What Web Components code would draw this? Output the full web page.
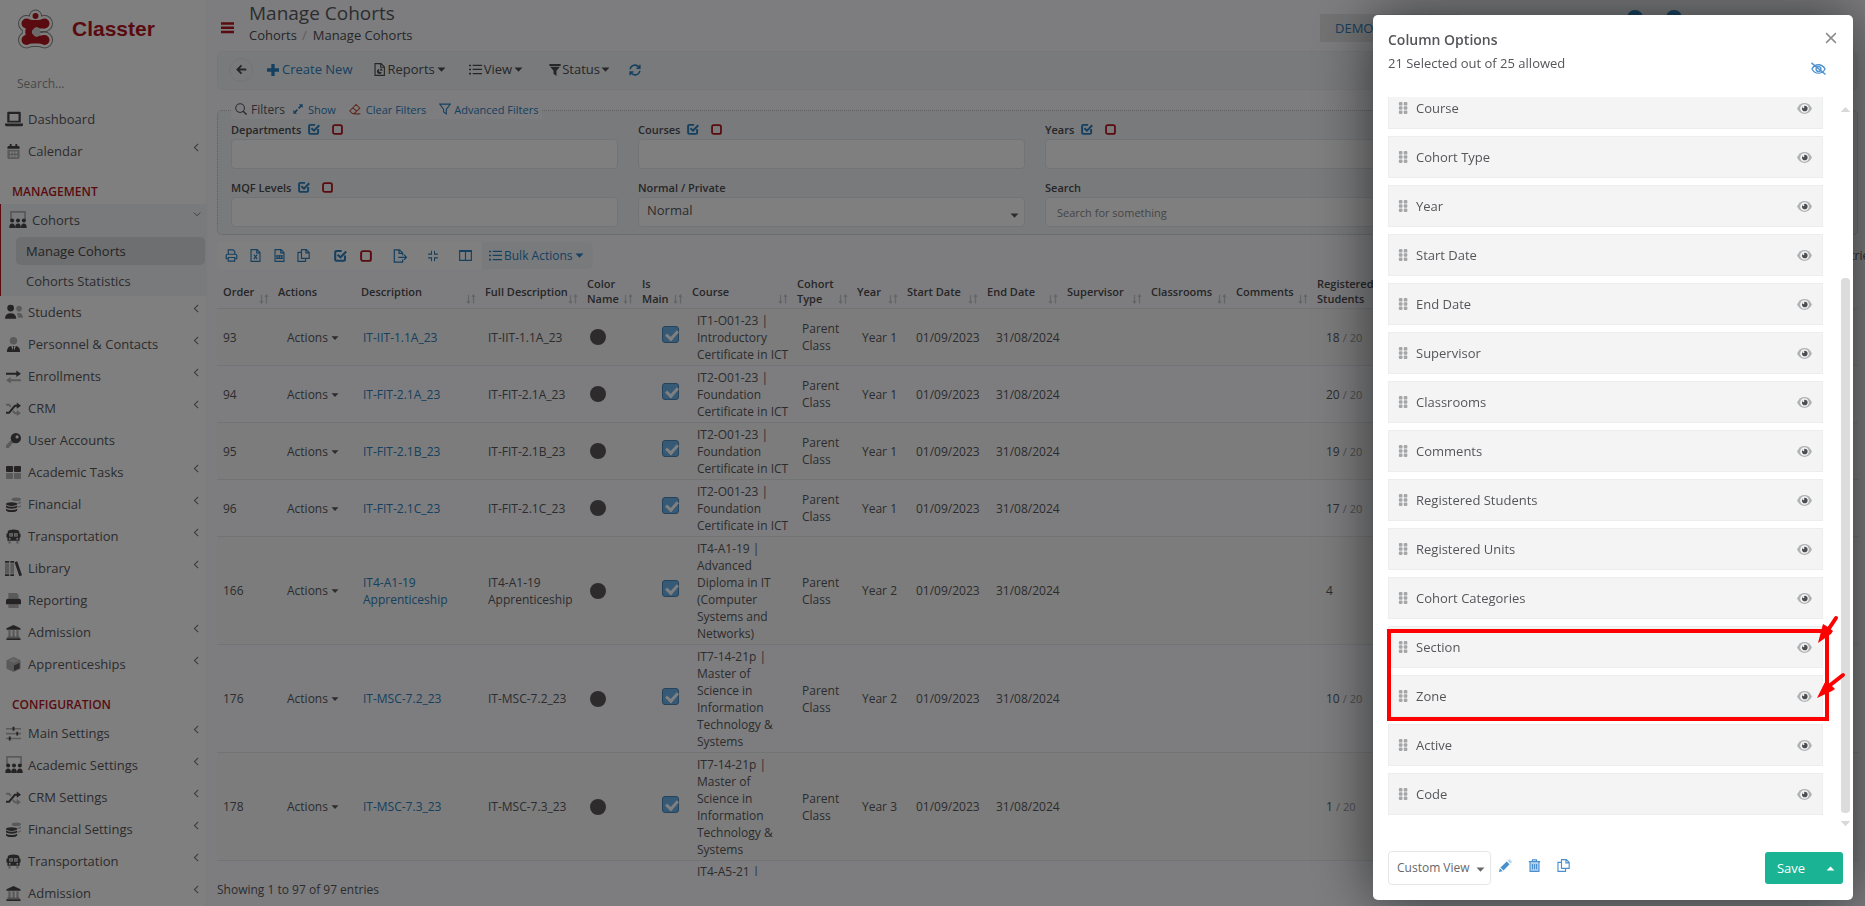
<!DOCTYPE html>
<html lang="en">
<head>
<meta charset="utf-8">
<title>Manage Cohorts</title>
<style>
  body {
    margin: 0;
    font: 13px/17px "Open Sans", "Noto Sans", sans-serif;
    color: #58595c;
    --link: #2b80c0;
    --red: #b4161f;
    --panel: #f3f5f8;
    --page: #fafbfe;
    --line: #e4e7ea;
  }
</style>
</head>
<body>
<cohorts-app></cohorts-app>

<script>
  // Icons are drawn on a 16x16 grid; the faded parts give the two-tone look
  const ICONS = {
    laptop: '<path d="M2 2.500Q2 1.500 3 1.500H13Q14 1.500 14 2.500V11H2ZM4 3.500V9.500H12V3.500Z" fill-rule="evenodd"/><path d="M0 12H16V13Q16 14.500 14.500 14.500H1.500Q0 14.500 0 13Z"/>',
    calendar: '<g class="d"><path d="M1.500 6H14.500V14.500Q14.500 16 13 16H3Q1.500 16 1.500 14.500Z"/></g><path d="M1.500 5V3.500Q1.500 2 3 2H4V0H6V2H10V0H12V2H13Q14.500 2 14.500 3.500V5Z"/><path d="M4 8h2v2H4zM7 8h2v2H7zM10 8h2v2h-2zM4 12h2v2H4zM7 12h2v2H7zM10 12h2v2h-2z" fill="#fff"/>',
    classroom: '<path class="d" d="M1 0H15V8H13.500V1.500H2.500V8H1Z"/><circle cx="2.800" cy="8.500" r="1.800"/><circle cx="8" cy="8.500" r="1.800"/><circle cx="13.200" cy="8.500" r="1.800"/><path d="M.3 15Q0 11 2.800 11T5.300 15ZM5.500 15Q5.200 11 8 11T10.500 15ZM10.700 15Q10.400 11 13.200 11T15.700 15Z"/>',
    users: '<circle cx="5" cy="4.500" r="3"/><path d="M0 14Q0 9 5 9T10 14Z"/><g class="d"><circle cx="12.500" cy="5" r="2.500"/><path d="M10.500 9Q16 8 16 13H11.500Q11.500 10.500 10.500 9Z"/></g>',
    tie: '<circle class="d" cx="8" cy="4" r="4"/><path d="M1 16Q1 10 5.500 9.500L7.300 14 7.600 11 7 9.500H9L8.400 11 8.700 14 10.500 9.500Q15 10 15 16Z"/>',
    swap: '<path d="M0 4H11V1.500L16 5 11 8.500V6H0Z"/><path class="d" d="M16 11H5V8.500L0 12 5 15.500V13H16Z"/>',
    shuffle: '<path d="M0 11.500H2.800L9 4H11.500V1.500L16 5 11.500 8.300V6H10L3.800 13.500H0Z"/><path class="d" d="M0 3H3.800L6 5.500 4.600 7 2.800 5H0ZM8 9.800 10 12H11.500V9.500L16 13 11.500 16V14H9L6.500 11.300Z"/>',
    key: '<path d="M10.500 0A5.500 5.500 0 1 0 10.500 11 5.500 5.500 0 0 0 10.500 0M11.800 2.500A1.700 1.700 0 1 1 11.800 5.900 1.700 1.700 0 0 1 11.800 2.500" fill-rule="evenodd"/><path class="d" d="M5.500 7.500 0 13V16H3.500V14H5.500V12L8.500 10.600Z"/>',
    tasks: '<rect x="0" y="1" width="7.500" height="6.500" rx="1"/><rect x="8.500" y="1" width="7.500" height="6.500" rx="1"/><g class="d"><rect x="0" y="8.500" width="7.500" height="6.500" rx="1"/><rect x="8.500" y="8.500" width="7.500" height="6.500" rx="1"/></g>',
    coins: '<g class="d"><ellipse cx="11" cy="2.500" rx="5" ry="2"/><path d="M12 6Q15 6 16 4.500V6Q15 7.500 12.500 7.500ZM12.800 10Q15 9.800 16 8.500V10Q15 11 12.800 11.500Z"/></g><ellipse cx="6" cy="7.500" rx="6" ry="2"/><path d="M0 9Q2 10.500 6 10.500T12 9V11Q11 12.500 6 12.500T0 11ZM0 12.500Q2 13.800 6 13.800T12 12.500V14Q11 16 6 16T0 14Z"/>',
    bus: '<path d="M2 2.500Q3 .5 8 .5T14 2.500L14.500 5H15.500V9H14.500V12.500H1.500V9H.5V5H1.500ZM3.500 4.500V8H7.400V4.500ZM8.600 4.500V8H12.500V4.500ZM4 9.500A1 1 0 1 0 4 11.500 1 1 0 0 0 4 9.500M12 9.500A1 1 0 1 0 12 11.500 1 1 0 0 0 12 9.500" fill-rule="evenodd"/><path class="d" d="M2.500 13H5V15.500H2.500ZM11 13H13.500V15.500H11ZM4 5H7V7.500H4ZM9 5H12V7.500H9Z"/>',
    books: '<g class="d"><path d="M0 3H4V13H0ZM5 3H8.500V13H5Z"/></g><path d="M0 1H4V2.500H0ZM5 1H8.500V2.500H5ZM0 13.500H4V15H0ZM5 13.500H8.500V15H5ZM9 2 11.500 1.200 16 14.300 13.500 15.200Z"/>',
    printer: '<g class="d"><path d="M2.500 0H11.500L13.500 2V6H2.500ZM2.500 12H13.500V16H2.500Z"/></g><path d="M2 6H14Q16 6 16 8V12H0V8Q0 6 2 6Z"/>',
    bank: '<path d="M8 0 15.500 3.500V5H.5V3.500ZM.5 14H15.500V16H.5ZM1.500 12.500H14.500V13.300H1.500Z"/><path class="d" d="M2.500 5.500H5V12.500H2.500ZM6.800 5.500H9.300V12.500H6.800ZM11 5.500H13.500V12.500H11Z"/>',
    cube: '<path class="d" d="M8 0 15.500 3.500V12.500L8 16 .5 12.500V3.500Z"/><path d="M8 1.300 13.500 3.800 8 6.300 2.500 3.800Z" fill="#fff" opacity=".35"/><path d="M14.500 6V12L8.500 15V9Z" opacity=".8"/>',
    sliders: '<g class="d"><path d="M0 2H16V3.800H0ZM0 7.200H16V9H0ZM0 12.400H16V14.200H0Z"/></g><path d="M7 .8H9V5H7ZM11 6H13V10.200H11ZM3 11.200H5V15.400H3Z"/>',
    left: '<path d="M10 3.500 5.500 8 10 12.500" class="s"/>',
    down: '<path d="M1.500 5 8 11.500 14.500 5" class="s m"/>',
    caret: '<path d="M1 4.500H15L8 12Z"/>',
    caretUp: '<path d="M1 11.500H15L8 4.500Z"/>',
    menu: '<path d="M0 1.500H16V4.500H0ZM0 6.700H16V9.700H0ZM0 12H16V15H0Z"/>',
    back: '<path d="M15 8H2.500M8 2 2 8 8 14" class="s b"/>',
    plus: '<path d="M5.800 0H10.200V5.800H16V10.200H10.200V16H5.800V10.200H0V5.800H5.800Z"/>',
    report: '<path d="M2.500 .8H10L14 4.800V15.200H2.500ZM9.500 1V5.200H14" class="s"/><path d="M7.500 7.500A3 3 0 1 0 10.800 11H7.700Z"/><path d="M9 6.500A3 3 0 0 1 11.800 9.500H9Z"/>',
    list: '<path d="M0 2H2.500V4H0ZM0 7H2.500V9H0ZM0 12H2.500V14H0ZM4.500 2.200H16V3.700H4.500ZM4.500 7.200H16V8.700H4.500ZM4.500 12.200H16V13.700H4.500Z"/>',
    filter: '<path d="M.5 0H15.500V2.500H.5ZM1.500 3.500H14.500L10 9V16L6 13V9Z"/>',
    funnel: '<path d="M1 1.500H15L9.800 8.500V14.500L6.200 12V8.500Z" class="s"/>',
    refresh: '<path d="M1.500 7A6.500 6.500 0 0 1 13 4L14.500 5.500M14.500 1V5.500H10M14.500 9A6.500 6.500 0 0 1 3 12L1.500 10.500M1.500 15V10.500H6" class="s m"/>',
    search: '<circle cx="6.800" cy="6.800" r="5.800" class="s"/><path d="M11 11 15.500 15.500" class="s m"/>',
    expand: '<path d="M9.500 .5H15.500V6.500L13.500 4.500 10 8 8 6 11.500 2.500ZM6.500 15.500H.5V9.500L2.500 11.500 6 8 8 10 4.500 13.500Z"/>',
    eraser: '<path d="M9.500 2 14.500 7 7 14H4.500L1 10.500ZM5 6.500 10.500 11M6 14.500H15" class="s"/>',
    print: '<path d="M4 6V1H10L12 3V6M4 12H1.500V8Q1.500 6.500 3 6.500H13Q14.500 6.500 14.500 8V12H12M4 10.500H12V15H4Z" class="s"/>',
    xls: '<path d="M2.500 .7H10L13.500 4.200V15.300H2.500ZM9.500 1V4.700H13.300M6 7 10 12.500M10 7 6 12.500" class="s"/>',
    csv: '<path d="M2.500 .7H10L13.500 4.200V15.300H2.500ZM9.500 1V4.700H13.300" class="s"/><path d="M4 8.500H12M4 11.500H12" class="s"/><path d="M5 8V12M8 8V12M11 8V12" class="s"/>',
    copy: '<path d="M5.500 .8H11.500L15 4.300V11.500H5.500ZM11 1V4.800H14.800M5 4.200H1.200V15.200H10.500V12" class="s"/>',
    checked: '<path d="M13.500 8V13Q13.500 14.500 12 14.500H3Q1.500 14.500 1.500 13V4Q1.500 2.500 3 2.500H9.500M4.500 7 8 10.300 15 3" class="s b"/>',
    square: '<rect x="1.500" y="1.500" width="13" height="13" rx="2.500" class="s b"/>',
    exported: '<path d="M11 7V4.500L7.500 1H1.500V15H11V12M7 1V5H11M6 9.500H15.500M12.500 6.500 15.500 9.500 12.500 12.500" class="s"/>',
    compress: '<path d="M6 1V5.500H1.500M10 1V5.500H14.500M6 15V10.500H1.500M10 15V10.500H14.500" class="s"/>',
    columns: '<path d="M.8 2H15.200V14H.8ZM8 2V14" class="s"/><path d="M.8 1.500H15.200V3.800H.8Z"/>',
    sort: '<path d="M4 1V14M1.500 11.500 4 14.500 6.500 11.500M12 15V2M9.500 4.500 12 1.500 14.500 4.500" class="s m"/>',
    close: '<path d="M1.500 1.500 14.500 14.500M14.500 1.500 1.500 14.500" class="s m"/>',
    grip: '<g><rect x="2.500" y="0" width="4.800" height="4.800" rx="1.300"/><rect x="9" y="0" width="4.800" height="4.800" rx="1.300"/><rect x="2.500" y="5.600" width="4.800" height="4.800" rx="1.300"/><rect x="9" y="5.600" width="4.800" height="4.800" rx="1.300"/><rect x="2.500" y="11.200" width="4.800" height="4.800" rx="1.300"/><rect x="9" y="11.200" width="4.800" height="4.800" rx="1.300"/></g>',
    eye: '<path d="M0 8Q3 2.200 8 2.200T16 8Q13 13.800 8 13.800T0 8Z" fill="#b0b2b4"/><circle cx="8" cy="8" r="4.600" fill="#f6f6f6"/><circle cx="8.300" cy="8" r="3" fill="#4c4e51"/><circle cx="6.800" cy="6.500" r="1.100" fill="#f6f6f6"/>',
    eyeSlash: '<path d="M1 8.500Q3.500 4 8 4T15 8.500Q12.500 13 8 13T1 8.500ZM.5 2 15.500 14.500" class="s"/><circle cx="8" cy="8.500" r="2.600" class="s"/>',
    pencil: '<path d="M0 16 1 11.500 4.500 15Z"/><path d="M1.800 10.500 9.500 3 13 6.500 5.500 14.200Z"/><path class="d" d="M10.500 2 12 .5Q13 0 14 1L15 2Q16 3 15.500 4L14 5.500Z"/>',
    trash: '<path class="d" d="M2.500 4H13.500V15H2.500Z"/><path d="M1 3.300H15M5.500 3V1H10.500V3M2.500 3.500V15.200H13.500V3.500M5.500 6V12.500M8 6V12.500M10.500 6V12.500" class="s"/>'
  };

  // Small helper so that every element sets up its shadow root the same way
  class BaseElement extends HTMLElement {
    constructor() {
      super();
      this.attachShadow({ mode: 'open' });
    }

    connectedCallback() {
      this.render();
    }

    paint(css, html) {
      this.shadowRoot.innerHTML = `
        <style>
          * { box-sizing: border-box; }
          a { color: inherit; text-decoration: none; }
          button, input, select { font: inherit; color: inherit; }
          button { padding: 0; border: 0; background: none; cursor: pointer; }
          ${css}
        </style>
        ${html}`;
    }
  }

  class AppIcon extends BaseElement {
    render() {
      const size = this.getAttribute('size') || 12;
      this.paint(`
        :host { display: inline-flex; flex: none; }
        svg { display: block; fill: currentColor; }
        .d { opacity: .4; }
        .s { fill: none; stroke: currentColor; stroke-width: 1.4; }
        .m { stroke-width: 2; }
        .b { stroke-width: 2.6; }
      `, `<svg width="${size}" height="${size}" viewBox="0 0 16 16" aria-hidden="true">${ICONS[this.getAttribute('name')]}</svg>`);
    }
  }

  class BrandLogo extends BaseElement {
    render() {
      this.paint(`
        :host { display: flex; align-items: center; gap: 18px; padding: 8px 17px 0; }
        strong { font: bold 21px/24px "Liberation Sans", Arial, sans-serif; color: var(--red); }
      `, `
        <svg width="37" height="42" viewBox="0 0 37 42" aria-hidden="true">
          <defs>
            <g id="mark" stroke-linejoin="round" stroke-linecap="round">
              <circle cx="18.500" cy="8" r="3"/>
              <circle cx="9.500" cy="15.500" r="5"/><circle cx="27.500" cy="15.500" r="5"/>
              <circle cx="9.500" cy="32" r="5"/><circle cx="27.500" cy="32" r="5"/>
              <path d="M9 11 16 12H21L28 11V20.500L22.500 20.500A4.500 4.500 0 1 0 22.500 27.500L28 27.500V36L21 35.500H16L9 36V30Q7.500 23.500 9 18Z"/>
            </g>
          </defs>
          <use href="#mark" fill="#888" stroke="#888" stroke-width="7"/>
          <use href="#mark" fill="#fff" stroke="#fff" stroke-width="5"/>
          <circle cx="19.500" cy="24" r="4" fill="#d4d4d6"/>
          <use href="#mark" fill="#b4161f"/>
        </svg>
        <strong>Classter</strong>`);
    }
  }

  class NavItem extends BaseElement {
    render() {
      const arrow = this.getAttribute('arrow');
      this.paint(`
        :host { display: block; }
        a { display: flex; align-items: center; gap: 5px; height: 32px; padding: 0 3px 0 4px; color: #58585d; }
        .icon { display: flex; justify-content: center; width: 19px; color: #4c4649; }
        .text { flex: 1; white-space: nowrap; }
        .arrow { height: 20px; color: #7d7d80; }
        .arrow.down { margin-right: 2px; }
      `, `
        <a href="#">
          <span class="icon"><app-icon name="${this.getAttribute('icon')}" size="${this.getAttribute('size') || 15}"></app-icon></span>
          <span class="text"><slot></slot></span>
          ${arrow ? `<app-icon class="arrow ${arrow}" name="${arrow}" size="${arrow === 'down' ? 8 : 13}"></app-icon>` : ''}
        </a>`);
    }
  }

  class AppSidebar extends BaseElement {
    render() {
      const item = ([icon, text, arrow = 'left', size = 15]) =>
        `<nav-item icon="${icon}" arrow="${arrow}" size="${size}">${text}</nav-item>`;
      const management = [
        ['users', 'Students', 'left', 18], ['tie', 'Personnel &amp; Contacts'], ['swap', 'Enrollments'],
        ['shuffle', 'CRM'], ['key', 'User Accounts', ''], ['tasks', 'Academic Tasks'], ['coins', 'Financial'],
        ['bus', 'Transportation'], ['books', 'Library', 'left', 17], ['printer', 'Reporting', ''],
        ['bank', 'Admission'], ['cube', 'Apprenticeships']
      ];
      const configuration = [
        ['sliders', 'Main Settings'], ['classroom', 'Academic Settings', 'left', 18], ['shuffle', 'CRM Settings'],
        ['coins', 'Financial Settings'], ['bus', 'Transportation'], ['bank', 'Admission']
      ];
      this.paint(`
        :host { display: block; width: 207px; height: 100vh; overflow: hidden; background: #fff; border-right: 1px solid #f4f5f8; }
        input { display: block; width: 100%; height: 28px; margin: 19px 0 6px; padding: 0 17px; border: 0; background: none; font-size: 12px; outline: 0; }
        input::placeholder { color: #8f9092; opacity: 1; }
        h2 { margin: 0; padding: 16px 12px 4px; font-size: 12px; line-height: 17px; font-weight: 600; color: var(--red); }
        .open { height: 92px; padding-left: 3px; border-left: 1px solid var(--red); background: var(--panel); }
        .open a { display: block; height: 28px; margin: 1px 1px 2px 12px; padding: 0 10px; border-radius: 5px; line-height: 28px; color: #58585d; }
        .open a.current { background: #dcdee1; color: #48484b; }
      `, `
        <brand-logo></brand-logo>
        <input type="text" placeholder="Search..." aria-label="Search">
        ${item(['laptop', 'Dashboard', '', 18])}
        ${item(['calendar', 'Calendar'])}
        <h2>MANAGEMENT</h2>
        <div class="open">
          ${item(['classroom', 'Cohorts', 'down', 18])}
          <a class="current" href="#">Manage Cohorts</a>
          <a href="#">Cohorts Statistics</a>
        </div>
        ${management.map(item).join('')}
        <h2>CONFIGURATION</h2>
        ${configuration.map(item).join('')}`);
    }
  }

  class PageHeader extends BaseElement {
    render() {
      this.paint(`
        :host { display: flex; align-items: flex-start; height: 51px; padding-left: 4px; }
        .menu { display: flex; margin-top: 21px; color: var(--red); }
        .titles { flex: 1; padding-left: 15px; }
        h1 { margin: 0; font-size: 19px; line-height: 26px; font-weight: 400; }
        ol { display: flex; margin: 1px 0 0; padding: 0; list-style: none; color: #4c4d50; }
        li + li::before { content: "/"; padding: 0 6px 0 5px; color: #bbb; }
        .demo { width: 140px; height: 28px; margin-top: 14px; padding-left: 15px; background: #e6e7e9; text-align: left; color: var(--link); }
        .badges { display: flex; gap: 23px; width: 398px; padding: 10px 0 0 167px; }
        .badges i { width: 16px; height: 16px; border-radius: 50%; background: #348bcb; }
      `, `
        <button class="menu" aria-label="Toggle menu"><app-icon name="menu" size="13"></app-icon></button>
        <div class="titles">
          <h1>Manage Cohorts</h1>
          <ol><li><a href="#">Cohorts</a></li><li>Manage Cohorts</li></ol>
        </div>
        <button class="demo">DEMO</button>
        <div class="badges"><i></i><i></i></div>`);
    }
  }

  class PageToolbar extends BaseElement {
    render() {
      this.paint(`
        :host { display: flex; align-items: center; height: 39px; padding: 0 0 2px 11px; border: 1px solid #edeff2; border-radius: 6px; background: var(--panel); }
        button { display: flex; align-items: center; gap: 2px; height: 24px; color: #4d4d50; }
        .back { justify-content: center; width: 24px; margin-right: 14px; border: 1px solid var(--line); border-radius: 50%; }
        .new, .refresh { color: var(--link); }
        .new { margin-right: 20px; gap: 3px; }
        .report { margin-right: 23px; }
        .view { margin-right: 26px; }
        .status { margin-right: 19px; gap: 1px; }
      `, `
        <button class="back" aria-label="Back"><app-icon name="back" size="11"></app-icon></button>
        <button class="new"><app-icon name="plus" size="12"></app-icon>Create New</button>
        <button class="report"><app-icon name="report" size="13"></app-icon>Reports<app-icon name="caret" size="9"></app-icon></button>
        <button class="view"><app-icon name="list" size="13"></app-icon>View<app-icon name="caret" size="9"></app-icon></button>
        <button class="status"><app-icon name="filter" size="12"></app-icon>Status<app-icon name="caret" size="9"></app-icon></button>
        <button class="refresh" aria-label="Refresh"><app-icon name="refresh" size="12"></app-icon></button>`);
    }
  }

  class FilterField extends BaseElement {
    render() {
      const label = this.getAttribute('label');
      const type = this.getAttribute('type');
      const control = type === 'select'
        ? '<select id="field"><option>Normal</option><option>Private</option></select><app-icon name="caret" size="9"></app-icon>'
        : `<input id="field" type="text" placeholder="${this.getAttribute('placeholder') || ''}">`;
      this.paint(`
        :host { display: block; }
        .top { display: flex; align-items: center; height: 20px; }
        label { margin-right: 7px; font-size: 11px; font-weight: 600; color: #4c4c50; }
        button { display: flex; margin-right: 12px; color: var(--link); }
        button + button { color: var(--red); }
        .box { position: relative; }
        input, select { display: block; width: 100%; height: 30px; border: 1px solid var(--line); border-radius: 4px; background: #fff; outline: 0; }
        input { padding: 0 11px; font-size: 11px; }
        input::placeholder { color: #8b8c8e; opacity: 1; }
        select { appearance: none; padding: 0 8px 3px; color: #58595c; }
        .box app-icon { position: absolute; right: 6px; top: 14px; pointer-events: none; }
      `, `
        <div class="top">
          <label for="field">${label}</label>
          ${type === 'multi' ? `<button aria-label="Select all"><app-icon name="checked"></app-icon></button>
          <button aria-label="Clear"><app-icon name="square" size="11"></app-icon></button>` : ''}
        </div>
        <div class="box">${control}</div>`);
    }
  }

  class FilterPanel extends BaseElement {
    render() {
      this.paint(`
        :host { display: block; margin-top: 11px; }
        fieldset { min-width: 0; margin: 0; padding: 0 18px 7px 13px; border: 1px dotted #bfc2c6; border-radius: 5px; background: var(--panel); }
        legend { display: flex; align-items: center; height: 18px; padding: 0 4px 2px; background: var(--page); font-size: 11px; }
        legend span { margin: 0 8px 0 4px; font-size: 12px; }
        a { display: flex; align-items: center; gap: 5px; margin-right: 13px; color: var(--link); }
        a:last-child { gap: 3px; margin: 0; }
        .eraser { color: #c0563f; }
        .grid { display: grid; grid-template-columns: repeat(4, 1fr); gap: 8px 20px; }
      `, `
        <fieldset>
          <legend>
            <app-icon name="search"></app-icon><span>Filters</span>
            <a href="#"><app-icon name="expand" size="10"></app-icon>Show</a>
            <a href="#"><app-icon class="eraser" name="eraser" size="12"></app-icon>Clear Filters</a>
            <a href="#"><app-icon name="funnel" size="12"></app-icon>Advanced Filters</a>
          </legend>
          <div class="grid">
            <filter-field label="Departments" type="multi"></filter-field>
            <filter-field label="Courses" type="multi"></filter-field>
            <filter-field label="Years" type="multi"></filter-field>
            <span></span>
            <filter-field label="MQF Levels" type="multi"></filter-field>
            <filter-field label="Normal / Private" type="select"></filter-field>
            <filter-field label="Search" placeholder="Search for something"></filter-field>
          </div>
        </fieldset>`);
    }
  }

  class TableActions extends BaseElement {
    render() {
      this.paint(`
        :host { display: flex; align-items: center; justify-content: space-between; margin-top: 7px; height: 27px; }
        .group { display: flex; height: 27px; border-radius: 5px; background: #fff; overflow: hidden; }
        .group div { display: flex; align-items: center; gap: 11px; padding: 0 10px 0 8px; color: var(--link); }
        .group button { display: flex; align-items: center; }
        .check { margin-left: 13px; }
        .red { color: var(--red); margin: 0 10px 0 2px; }
        .wide { margin-right: 9px; }
        .group .bulk { gap: 2px; padding: 0 9px 0 7px; background: var(--panel); color: var(--link); font-size: 12px; }
        .entries { margin-right: -17px; font-size: 12px; white-space: nowrap; }
      `, `
        <div class="group">
          <div>
            <button aria-label="Print"><app-icon name="print" size="13"></app-icon></button>
            <button aria-label="Excel"><app-icon name="xls" size="13"></app-icon></button>
            <button aria-label="CSV"><app-icon name="csv" size="13"></app-icon></button>
            <button aria-label="Copy"><app-icon name="copy" size="13"></app-icon></button>
            <button class="check" aria-label="Select all"><app-icon name="checked" size="13"></app-icon></button>
            <button class="red" aria-label="Deselect all"><app-icon name="square" size="12"></app-icon></button>
            <button class="wide" aria-label="Export"><app-icon name="exported" size="14"></app-icon></button>
            <button class="wide" aria-label="Collapse"><app-icon name="compress" size="12"></app-icon></button>
            <button aria-label="Columns"><app-icon name="columns" size="13"></app-icon></button>
          </div>
          <button class="bulk"><app-icon name="list" size="13"></app-icon>Bulk Actions<app-icon name="caret" size="9"></app-icon></button>
        </div>
        <span class="entries">entries</span>`);
    }
  }

  class CohortsTable extends BaseElement {
    render() {
      const columns = [
        ['Order', 55], ['Actions', 83], ['Description', 124], ['Full Description', 102], ['Color Name', 55],
        ['Is<br>Main', 50], ['Course', 105], ['Cohort Type', 60], ['Year', 50], ['Start Date', 80],
        ['End Date', 80], ['Supervisor', 84], ['Classrooms', 85], ['Comments', 81], ['Registered Students', 100]
      ];
      const foundation = 'IT2-O01-23 | Foundation Certificate in ICT';
      const master = 'IT7-14-21p | Master of Science in Information Technology &amp; Systems';
      const rows = [
        [93, 'IT-IIT-1.1A_23', 'IT1-O01-23 | Introductory Certificate in ICT', 1, 18, 20],
        [94, 'IT-FIT-2.1A_23', foundation, 1, 20, 20],
        [95, 'IT-FIT-2.1B_23', foundation, 1, 19, 20],
        [96, 'IT-FIT-2.1C_23', foundation, 1, 17, 20],
        [166, 'IT4-A1-19 Apprenticeship', 'IT4-A1-19 | Advanced Diploma in IT (Computer Systems and Networks)', 2, 4, 0],
        [176, 'IT-MSC-7.2_23', master, 2, 10, 20],
        [178, 'IT-MSC-7.3_23', master, 3, 1, 20]
      ];
      const row = ([order, name, course, year, count, max]) => `
        <tr class="${order > 100 ? 'tall' : ''}">
          <td>${order}</td>
          <td class="far"><button>Actions <app-icon name="caret" size="8"></app-icon></button></td>
          <td class="near"><a href="#">${name}</a></td>
          <td>${name}</td>
          <td><i></i></td>
          <td class="main"><input type="checkbox" checked aria-label="${name} is main"></td>
          <td class="mid">${course}</td>
          <td class="mid">Parent Class</td>
          <td class="mid">Year ${year}</td>
          <td class="far">01/09/2023</td>
          <td class="far">31/08/2024</td>
          <td></td><td></td><td></td>
          <td class="far">${count}${max ? ` <small>/ ${max}</small>` : ''}</td>
          <td></td>
        </tr>`;
      this.paint(`
        :host { display: block; flex: 1; min-height: 0; margin-top: 5px; overflow: hidden; }
        table { width: 100%; table-layout: fixed; border-collapse: separate; border-spacing: 0; font-size: 12px; }
        th { height: 35px; padding: 0 3px 0 6px; text-align: left; font-size: 11px; line-height: 15px; font-weight: 600; color: #4c4c50; }
        th div { display: flex; align-items: center; justify-content: space-between; height: 31px; }
        th app-icon { align-self: flex-end; color: #c9cbce; margin: 0 0 3px -8px; }
        th, td { border-bottom: 1px solid var(--line); }
        td { height: 57px; padding: 2px 0 2px 9px; }
        td:first-child { padding-left: 6px; }
        td.near { padding-left: 8px; }
        td.mid { padding-left: 11px; }
        td.far { padding-left: 15px; white-space: nowrap; }
        td.main { padding-left: 26px; }
        .tall td { height: 108px; }
        .last td { vertical-align: top; }
        tbody tr:nth-child(odd) { background: #f8f8f8; }
        a { color: var(--link); }
        small { font-size: 11px; color: #999a9d; }
        i { display: block; width: 16px; height: 16px; border-radius: 50%; background: #5a5659; }
        input { display: block; appearance: none; width: 17px; height: 17px; margin: 0 0 5px; border: 1px solid #4c86b8; border-radius: 3px; background: #6cb2ec; }
        input:checked::after { content: ""; display: block; width: 5px; height: 9px; margin: 1px 0 0 5px; border: solid #fff; border-width: 0 3px 3px 0; transform: rotate(42deg); }
      `, `
        <table>
          <colgroup>${columns.map(([, width]) => `<col style="width: ${width}px">`).join('')}<col></colgroup>
          <thead><tr>
            ${columns.map(([text]) => `<th><div><span>${text}</span>${text === 'Actions' || text === 'Registered Students' ? '' : '<app-icon name="sort" size="10"></app-icon>'}</div></th>`).join('')}
            <th></th>
          </tr></thead>
          <tbody>
            ${rows.map(row).join('')}
            <tr class="tall last"><td colspan="6"></td><td class="mid">IT4-A5-21 |</td><td colspan="9"></td></tr>
          </tbody>
        </table>`);
    }
  }

  class ColumnItem extends BaseElement {
    render() {
      this.paint(`
        :host { display: flex; flex: none; align-items: center; height: 42px; padding: 0 10px 0 8px; border: 1px solid #eceded; background: #f4f4f4; }
        .grip { color: #a5a6a8; }
        span { flex: 1; padding-left: 7px; }
        button { display: flex; }
      `, `
        <app-icon class="grip" name="grip" size="12"></app-icon>
        <span><slot></slot></span>
        <button aria-label="Toggle column"><app-icon name="eye" size="15"></app-icon></button>`);
    }
  }

  class ColumnDialog extends BaseElement {
    render() {
      const item = (text) => `<column-item>${text}</column-item>`;
      const before = ['Course', 'Cohort Type', 'Year', 'Start Date', 'End Date', 'Supervisor', 'Classrooms',
        'Comments', 'Registered Students', 'Registered Units', 'Cohort Categories'];
      this.paint(`
        :host { position: fixed; inset: 0; display: flex; justify-content: flex-end; padding: 15px 12px 6px; background: rgba(0, 0, 0, .5); color: #55565a; }
        .dialog { display: flex; flex-direction: column; width: 480px; border-radius: 5px; background: #fff; box-shadow: 0 0 60px rgba(0, 0, 0, .6); }
        header { display: grid; grid-template-columns: 1fr auto; align-content: start; height: 82px; padding: 14px 15px 0; }
        h2 { margin: 0; font-size: 14px; line-height: 22px; font-weight: 600; }
        p { margin: 0; line-height: 24px; }
        header button { display: flex; justify-content: flex-end; color: #8a8b8d; }
        .close { padding: 3px 1px; }
        .hide { padding: 10px 12px 0 0; }
        header .hide { color: #4a90cf; }
        .body { display: flex; flex: 1; min-height: 0; }
        .list { display: flex; flex: 1; flex-direction: column; justify-content: flex-end; gap: 7px; min-height: 0; padding: 0 15px 33px; overflow-y: clip; }
        .marked { position: relative; z-index: 1; display: flex; flex: none; flex-direction: column; gap: 7px; }
        .marked svg { position: absolute; left: -3px; top: -10px; overflow: visible; pointer-events: none; }
        .bar { display: flex; flex-direction: column; align-items: center; width: 15px; margin: 7px 0 19px; color: #d9d9d9; }
        .bar i { flex: 1; width: 9px; margin: 163px 0 5px; border-radius: 4px; background: #dcdcdc; }
        footer { display: flex; align-items: center; padding: 3px 10px 15px 15px; color: #4a90cf; }
        .view { position: relative; margin-right: 8px; color: #66686b; font-size: 12px; }
        select { display: block; appearance: none; width: 103px; height: 34px; padding: 0 8px 2px; border: 1px solid #e5e6e7; border-radius: 4px; background: #fff; outline: 0; }
        .view app-icon { position: absolute; right: 6px; top: 14px; pointer-events: none; }
        footer > button { display: flex; margin: 0 16px 6px 0; }
        .save { display: flex; height: 32px; margin: 0 0 0 auto; border-radius: 3px; overflow: hidden; color: #fff; }
        .save button { display: flex; align-items: center; justify-content: center; width: 26px; background: #1ab394; }
        .save button:first-child { width: 52px; }
      `, `
        <div class="dialog" role="dialog" aria-label="Column Options">
          <header>
            <h2>Column Options</h2>
            <button class="close" aria-label="Close"><app-icon name="close" size="12"></app-icon></button>
            <p>21 Selected out of 25 allowed</p>
            <button class="hide" aria-label="Hide all"><app-icon name="eyeSlash" size="15"></app-icon></button>
          </header>
          <div class="body">
            <div class="list">
              ${before.map(item).join('')}
              <div class="marked">
                ${item('Section')}
                ${item('Zone')}
                <svg width="465" height="100" viewBox="0 0 465 100" fill="#f00" stroke="#f00" aria-hidden="true">
                  <rect x="4" y="15" width="438" height="88" fill="none" stroke-width="4"/>
                  <path d="M451 2 441 17M458 59 444 70" stroke-width="4" stroke-linecap="round"/>
                  <path d="M433 27 438 8 443 11 448 15 446 18ZM432 82 441 64 445 68 450 73 447 75Z" stroke="none"/>
                </svg>
              </div>
              ${item('Active')}
              ${item('Code')}
            </div>
            <div class="bar"><app-icon name="caretUp" size="11"></app-icon><i></i><app-icon name="caret" size="11"></app-icon></div>
          </div>
          <footer>
            <div class="view">
              <select aria-label="View"><option>Custom View</option></select>
              <app-icon name="caret" size="9"></app-icon>
            </div>
            <button aria-label="Edit view"><app-icon name="pencil" size="13"></app-icon></button>
            <button aria-label="Delete view"><app-icon name="trash" size="13"></app-icon></button>
            <button aria-label="Copy view"><app-icon name="copy" size="13"></app-icon></button>
            <div class="save"><button>Save</button><button aria-label="More save options"><app-icon name="caretUp" size="9"></app-icon></button></div>
          </footer>
        </div>`);
    }
  }

  class CohortsApp extends BaseElement {
    render() {
      this.paint(`
        :host { display: flex; height: 100vh; overflow: hidden; background: var(--page); }
        main { flex: 1; min-width: 0; display: flex; flex-direction: column; padding: 0 7px 0 10px; }
        .info { padding: 5px 0 7px; font-size: 12px; line-height: 18px; }
      `, `
        <app-sidebar></app-sidebar>
        <main>
          <page-header></page-header>
          <page-toolbar></page-toolbar>
          <filter-panel></filter-panel>
          <table-actions></table-actions>
          <cohorts-table></cohorts-table>
          <div class="info">Showing 1 to 97 of 97 entries</div>
        </main>
        <column-dialog></column-dialog>`);
    }
  }

  customElements.define('app-icon', AppIcon);
  customElements.define('brand-logo', BrandLogo);
  customElements.define('nav-item', NavItem);
  customElements.define('app-sidebar', AppSidebar);
  customElements.define('page-header', PageHeader);
  customElements.define('page-toolbar', PageToolbar);
  customElements.define('filter-field', FilterField);
  customElements.define('filter-panel', FilterPanel);
  customElements.define('table-actions', TableActions);
  customElements.define('cohorts-table', CohortsTable);
  customElements.define('column-item', ColumnItem);
  customElements.define('column-dialog', ColumnDialog);
  customElements.define('cohorts-app', CohortsApp);
</script>
</body>
</html>
